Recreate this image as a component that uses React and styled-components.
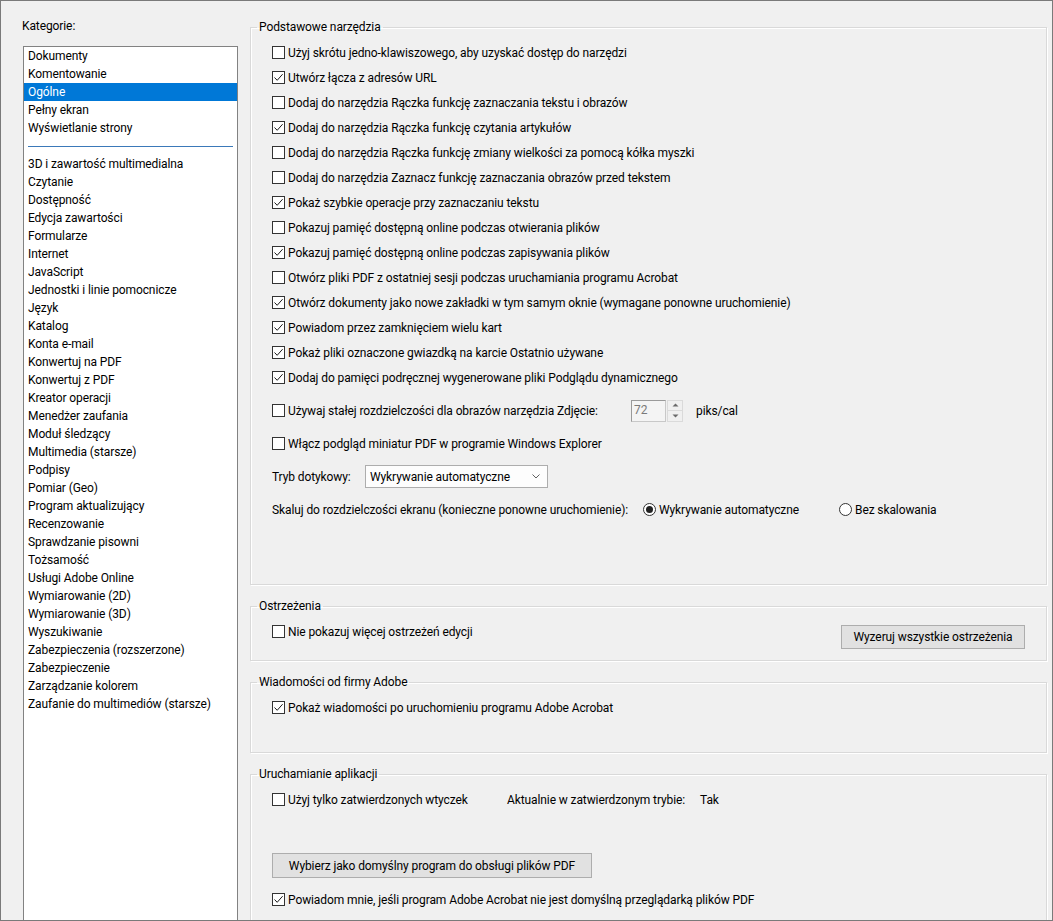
import React from 'react'
import styled, { createGlobalStyle } from 'styled-components'

const Global = createGlobalStyle`
    html, body {
        margin: 0;
        padding: 0;
        background: #f0f0f0;
    }
`

const Frame = styled.div`
    width: 1053px;
    height: 921px;
    box-sizing: border-box;
    border: 1px solid #7a7a7a;
    background: #f0f0f0;
    display: flex;
    overflow: hidden;
    font-family: "Segoe UI", Roboto, "Noto Sans", sans-serif;
    font-size: 12px;
    letter-spacing: -0.1px;
    color: #000;
`, LeftCol = styled.div`
    width: 249px;
    flex-shrink: 0;
    box-sizing: border-box;
    padding: 17px 0 0 22px;
    display: flex;
    flex-direction: column;
`, Caption = styled.div`
    line-height: 16px;
    margin-left: -1px;
    margin-bottom: 12px;
`, ListBox = styled.div`
    width: 215px;
    flex: 1;
    box-sizing: border-box;
    border: 1px solid #828282;
    border-bottom: none;
    background: #fff;
`, ListItem = styled.div`
    height: 18px;
    line-height: 18px;
    padding-left: 4px;
    white-space: nowrap;
    background: ${props => props.selected ? '#0078d7' : 'transparent'};
    color: ${props => props.selected ? '#fff' : '#000'};
`, ListSeparator = styled.div`
    height: 18px;
    display: flex;
    align-items: center;
    padding: 0 4px;
    &::after {
        content: '';
        flex: 1;
        height: 1px;
        background: #3b79b9;
    }
`, RightCol = styled.div`
    flex: 1;
    padding: 18px 5px 0 0;
    display: flex;
    flex-direction: column;
    gap: 13px;
`, Group = styled.fieldset`
    margin: 0;
    padding: 0;
    min-width: 0;
    border: 1px solid #d9d9d9;
    box-shadow: inset 1px 1px 0 #fff, 1px 1px 0 #fff;
    flex-shrink: 0;
`, Legend = styled.legend`
    margin-left: 6px;
    padding: 0 2px;
    line-height: 16px;
`, GroupBody = styled.div`
    padding: 5px 21px ${props => props.bottom}px 21px;
    display: flex;
    flex-direction: column;
`, Row = styled.div`
    height: 25px;
    display: flex;
    align-items: center;
    white-space: nowrap;
    margin-top: ${props => props.gap || 0}px;
`, Check = styled.label`
    display: flex;
    align-items: center;
    gap: 3px;
    height: 25px;
    white-space: nowrap;
    width: ${props => props.width ? props.width + 'px' : 'auto'};
    flex-shrink: 0;
`, Box = styled.span`
    width: 13px;
    height: 13px;
    box-sizing: border-box;
    border: 1px solid #333;
    background: #fff;
    display: flex;
    align-items: center;
    justify-content: center;
    flex-shrink: 0;
`, Radio = styled.span`
    width: 13px;
    height: 13px;
    box-sizing: border-box;
    border: 1px solid #333;
    border-radius: 50%;
    background: #fff;
    display: flex;
    align-items: center;
    justify-content: center;
    flex-shrink: 0;
    &::after {
        content: '';
        display: ${props => props.checked ? 'block' : 'none'};
        width: 7px;
        height: 7px;
        border-radius: 50%;
        background: #222;
    }
`, Label = styled.span`
    width: ${props => props.width ? props.width + 'px' : 'auto'};
    flex-shrink: 0;
`, Spinner = styled.div`
    display: flex;
    align-items: stretch;
    height: 22px;
    gap: 1px;
    margin-right: 13px;
`, SpinInput = styled.div`
    width: 35px;
    box-sizing: border-box;
    border: 1px solid #c8c8c8;
    border-top-color: #9a9a9a;
    border-left-color: #9a9a9a;
    color: #7a7a7a;
    padding-left: 2px;
    line-height: 18px;
    background: #f4f4f4;
`, SpinButtons = styled.div`
    width: 16px;
    box-sizing: border-box;
    border: 1px solid #dadada;
    display: flex;
    flex-direction: column;
`, SpinHalf = styled.div`
    flex: 1;
    display: flex;
    align-items: center;
    justify-content: center;
    & + & {
        border-top: 1px solid #dadada;
    }
`, Select = styled.div`
    width: 183px;
    height: 23px;
    box-sizing: border-box;
    border: 1px solid #adadad;
    background: #fdfdfd;
    display: flex;
    align-items: center;
    justify-content: space-between;
    padding: 0 7px 0 4px;
`, RadioOption = styled.label`
    display: flex;
    align-items: center;
    gap: 3px;
    width: ${props => props.width ? props.width + 'px' : 'auto'};
    flex-shrink: 0;
`, Button = styled.button`
    font: inherit;
    letter-spacing: inherit;
    color: #000;
    height: ${props => props.h}px;
    width: ${props => props.w}px;
    margin-top: ${props => props.top || 0}px;
    box-sizing: border-box;
    border: 1px solid #adadad;
    background: #e1e1e1;
    padding: 0;
    flex-shrink: 0;
`, SplitRow = styled.div`
    display: flex;
    justify-content: space-between;
    align-items: flex-start;
`

const categoriesTop = ['Dokumenty', 'Komentowanie', 'Ogólne', 'Pełny ekran', 'Wyświetlanie strony']
const categories = [
    '3D i zawartość multimedialna', 'Czytanie', 'Dostępność', 'Edycja zawartości', 'Formularze',
    'Internet', 'JavaScript', 'Jednostki i linie pomocnicze', 'Język', 'Katalog', 'Konta e-mail',
    'Konwertuj na PDF', 'Konwertuj z PDF', 'Kreator operacji', 'Menedżer zaufania', 'Moduł śledzący',
    'Multimedia (starsze)', 'Podpisy', 'Pomiar (Geo)', 'Program aktualizujący', 'Recenzowanie',
    'Sprawdzanie pisowni', 'Tożsamość', 'Usługi Adobe Online', 'Wymiarowanie (2D)',
    'Wymiarowanie (3D)', 'Wyszukiwanie', 'Zabezpieczenia (rozszerzone)', 'Zabezpieczenie',
    'Zarządzanie kolorem', 'Zaufanie do multimediów (starsze)'
]

const basicTools = [
    ['Użyj skrótu jedno-klawiszowego, aby uzyskać dostęp do narzędzi', false],
    ['Utwórz łącza z adresów URL', true],
    ['Dodaj do narzędzia Rączka funkcję zaznaczania tekstu i obrazów', false],
    ['Dodaj do narzędzia Rączka funkcję czytania artykułów', true],
    ['Dodaj do narzędzia Rączka funkcję zmiany wielkości za pomocą kółka myszki', false],
    ['Dodaj do narzędzia Zaznacz funkcję zaznaczania obrazów przed tekstem', false],
    ['Pokaż szybkie operacje przy zaznaczaniu tekstu', true],
    ['Pokazuj pamięć dostępną online podczas otwierania plików', false],
    ['Pokazuj pamięć dostępną online podczas zapisywania plików', true],
    ['Otwórz pliki PDF z ostatniej sesji podczas uruchamiania programu Acrobat', false],
    ['Otwórz dokumenty jako nowe zakładki w tym samym oknie (wymagane ponowne uruchomienie)', true],
    ['Powiadom przez zamknięciem wielu kart', true],
    ['Pokaż pliki oznaczone gwiazdką na karcie Ostatnio używane', true],
    ['Dodaj do pamięci podręcznej wygenerowane pliki Podglądu dynamicznego', true],
]

const CheckBox = ({ checked, children, width }) => (
    <Check width={width}>
        <Box>
            {checked &&
                <svg width="11" height="11" viewBox="0 0 11 11">
                    <path d="M1.5 5.5 L4.2 8.3 L9.6 2.2" fill="none" stroke="#1a1a1a" strokeWidth="1" />
                </svg>
            }
        </Box>
        <span>{children}</span>
    </Check>
)

const Arrow = ({ up }) => (
    <svg width="7" height="4" viewBox="0 0 7 4">
        <path d={up ? 'M0.5 3.5 L3.5 0.5 L6.5 3.5 Z' : 'M0.5 0.5 L3.5 3.5 L6.5 0.5 Z'} fill="#6a6a6a" />
    </svg>
)

export default function App() {
    return (
        <Frame>
            <Global />
            <LeftCol>
                <Caption>Kategorie:</Caption>
                <ListBox>
                    {categoriesTop.map(c => <ListItem key={c} selected={c === 'Ogólne'}>{c}</ListItem>)}
                    <ListSeparator />
                    {categories.map(c => <ListItem key={c}>{c}</ListItem>)}
                </ListBox>
            </LeftCol>
            <RightCol>
                <Group>
                    <Legend>Podstawowe narzędzia</Legend>
                    <GroupBody bottom={62}>
                        {basicTools.map(([text, checked]) => (
                            <Row key={text}><CheckBox checked={checked}>{text}</CheckBox></Row>
                        ))}
                        <Row gap={8}>
                            <CheckBox width={359}>Używaj stałej rozdzielczości dla obrazów narzędzia Zdjęcie:</CheckBox>
                            <Spinner>
                                <SpinInput>72</SpinInput>
                                <SpinButtons>
                                    <SpinHalf><Arrow up /></SpinHalf>
                                    <SpinHalf><Arrow /></SpinHalf>
                                </SpinButtons>
                            </Spinner>
                            <span>piks/cal</span>
                        </Row>
                        <Row gap={8}>
                            <CheckBox>Włącz podgląd miniatur PDF w programie Windows Explorer</CheckBox>
                        </Row>
                        <Row gap={8}>
                            <Label width={93}>Tryb dotykowy:</Label>
                            <Select>
                                <span>Wykrywanie automatyczne</span>
                                <svg width="8" height="5" viewBox="0 0 8 5">
                                    <path d="M0.5 0.5 L4 4 L7.5 0.5" fill="none" stroke="#606060" strokeWidth="1" />
                                </svg>
                            </Select>
                        </Row>
                        <Row gap={8}>
                            <Label width={371}>Skaluj do rozdzielczości ekranu (konieczne ponowne uruchomienie):</Label>
                            <RadioOption width={196}><Radio checked /><span>Wykrywanie automatyczne</span></RadioOption>
                            <RadioOption><Radio /><span>Bez skalowania</span></RadioOption>
                        </Row>
                    </GroupBody>
                </Group>
                <Group>
                    <Legend>Ostrzeżenia</Legend>
                    <GroupBody bottom={11}>
                        <SplitRow>
                            <Row><CheckBox>Nie pokazuj więcej ostrzeżeń edycji</CheckBox></Row>
                            <Button w={184} h={24} top={6}>Wyzeruj wszystkie ostrzeżenia</Button>
                        </SplitRow>
                    </GroupBody>
                </Group>
                <Group>
                    <Legend>Wiadomości od firmy Adobe</Legend>
                    <GroupBody bottom={32}>
                        <Row><CheckBox checked>Pokaż wiadomości po uruchomieniu programu Adobe Acrobat</CheckBox></Row>
                    </GroupBody>
                </Group>
                <Group>
                    <Legend>Uruchamianie aplikacji</Legend>
                    <GroupBody bottom={20}>
                        <Row>
                            <CheckBox width={235}>Użyj tylko zatwierdzonych wtyczek</CheckBox>
                            <Label width={193}>Aktualnie w zatwierdzonym trybie:</Label>
                            <span>Tak</span>
                        </Row>
                        <div>
                            <Button w={320} h={25} top={41}>Wybierz jako domyślny program do obsługi plików PDF</Button>
                        </div>
                        <Row gap={9}>
                            <CheckBox checked>Powiadom mnie, jeśli program Adobe Acrobat nie jest domyślną przeglądarką plików PDF</CheckBox>
                        </Row>
                    </GroupBody>
                </Group>
            </RightCol>
        </Frame>
    )
}
